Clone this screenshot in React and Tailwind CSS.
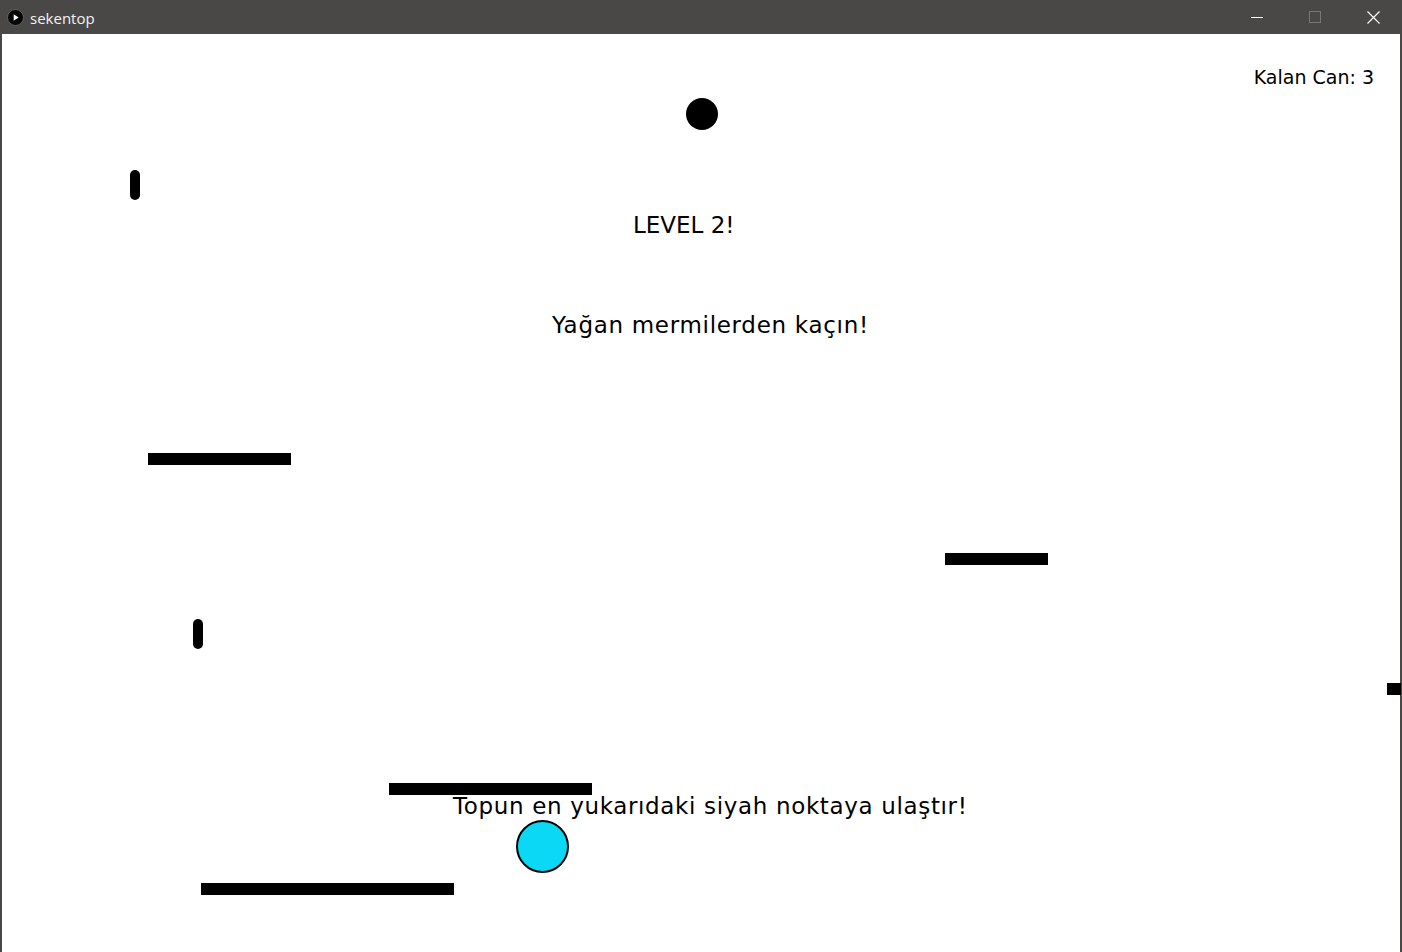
export default function App() {
  return (
    <div className="w-[1402px] h-[952px] flex flex-col bg-[#4a4846] overflow-hidden" style={{ fontFamily: '"DejaVu Sans", sans-serif' }}>
      {/* title bar */}
      <div className="h-[34px] flex items-center shrink-0 text-white">
        <div className="w-[30px] flex justify-center pt-[1px]">
          <svg width="17" height="17" viewBox="0 0 16 16">
            <circle cx="8" cy="8" r="7.5" fill="#050505" stroke="#6b6b6b" strokeWidth="0.8" />
            <path d="M6.3 4.9 L11 8 L6.3 11.1 Z" fill="#fff" />
          </svg>
        </div>
        <span className="text-[15px] text-[#f2f2f2] mt-[2px]" style={{ fontFamily: '"Open Sans", sans-serif' }}>sekentop</span>
        <div className="ml-auto flex h-full">
          <div className="w-[58px] flex items-center justify-center">
            <div className="w-[12px] h-[1px] bg-white" />
          </div>
          <div className="w-[58px] flex items-center justify-center">
            <div className="w-[12px] h-[12px] border border-[#777]" />
          </div>
          <div className="w-[58px] flex items-center justify-center">
            <svg width="13" height="13" viewBox="0 0 13 13">
              <path d="M0.5 0.5 L12.5 12.5 M12.5 0.5 L0.5 12.5" stroke="#fff" strokeWidth="1.2" />
            </svg>
          </div>
        </div>
      </div>

      {/* game canvas */}
      <div className="relative flex-1 bg-white border-x-2 border-[#4a4846] text-black text-[23px] leading-[26px]">
        <div className="absolute right-[26px] top-[32px] text-[19px] leading-[22px]">Kalan Can: 3</div>

        <div className="absolute left-[684px] top-[64px] w-[32px] h-[32px] rounded-full bg-black" />

        <div className="absolute left-[128px] top-[136px] w-[10px] h-[30px] rounded-full bg-black" />
        <div className="absolute left-[191px] top-[585px] w-[10px] h-[30px] rounded-full bg-black" />

        <div className="absolute left-[631px] top-[178px] whitespace-nowrap">LEVEL 2!</div>
        <div className="absolute left-[550px] top-[278px] whitespace-nowrap tracking-[0.7px]">Yağan mermilerden kaçın!</div>

        <div className="absolute left-[146px] top-[419px] w-[143px] h-[12px] bg-black" />
        <div className="absolute left-[943px] top-[519px] w-[103px] h-[12px] bg-black" />
        <div className="absolute left-[1385px] top-[649px] w-[14px] h-[12px] bg-black" />
        <div className="absolute left-[387px] top-[749px] w-[203px] h-[12px] bg-black" />

        <div className="absolute left-[451px] top-[759px] whitespace-nowrap tracking-[0.65px]">Topun en yukarıdaki siyah noktaya ulaştır!</div>

        <div className="absolute left-[514px] top-[786px] w-[53px] h-[53px] rounded-full bg-[#0ad8f5] border-2 border-black" />
        <div className="absolute left-[199px] top-[849px] w-[253px] h-[12px] bg-black" />
      </div>
    </div>
  );
}
